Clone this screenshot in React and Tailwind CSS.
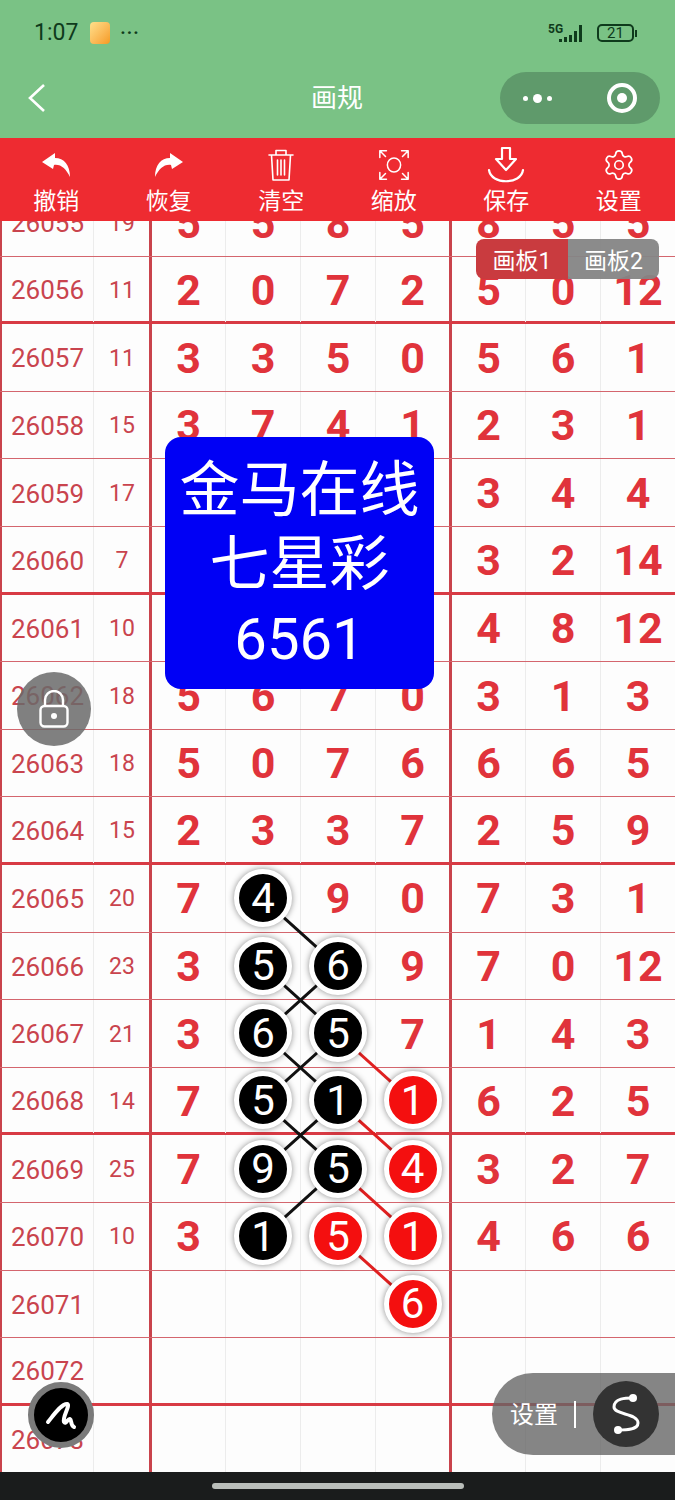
import React from 'react';
import { Settings } from 'lucide-react';

const ROW_H = 67.6;
const COL_X = [188, 263, 338, 413];

// b = black ball, r = red ball
const rows = [
  ['26055', '19', ['5', '5', '8', '5', '8', '5', '5']],
  ['26056', '11', ['2', '0', '7', '2', '5', '0', '12']],
  ['26057', '11', ['3', '3', '5', '0', '5', '6', '1']],
  ['26058', '15', ['3', '7', '4', '1', '2', '3', '1']],
  ['26059', '17', ['', '', '', '', '3', '4', '4']],
  ['26060', '7', ['', '', '', '', '3', '2', '14']],
  ['26061', '10', ['', '', '', '', '4', '8', '12']],
  ['26062', '18', ['5', '6', '7', '0', '3', '1', '3']],
  ['26063', '18', ['5', '0', '7', '6', '6', '6', '5']],
  ['26064', '15', ['2', '3', '3', '7', '2', '5', '9']],
  ['26065', '20', ['7', 'b4', '9', '0', '7', '3', '1']],
  ['26066', '23', ['3', 'b5', 'b6', '9', '7', '0', '12']],
  ['26067', '21', ['3', 'b6', 'b5', '7', '1', '4', '3']],
  ['26068', '14', ['7', 'b5', 'b1', 'r1', '6', '2', '5']],
  ['26069', '25', ['7', 'b9', 'b5', 'r4', '3', '2', '7']],
  ['26070', '10', ['3', 'b1', 'r5', 'r1', '4', '6', '6']],
  ['26071', '', ['', '', '', 'r6', '', '', '']],
  ['26072', '', ['', '', '', '', '', '', '']],
  ['26073', '', ['', '', '', '', '', '', '']],
];

// [col, row, col, row, color] between balls
const links = [
  [1, 10, 2, 11, '#111'],
  [1, 11, 2, 12, '#111'],
  [2, 11, 1, 12, '#111'],
  [1, 12, 2, 13, '#111'],
  [2, 12, 1, 13, '#111'],
  [2, 12, 3, 13, '#e02020'],
  [1, 13, 2, 14, '#111'],
  [2, 13, 1, 14, '#111'],
  [2, 13, 3, 14, '#e02020'],
  [2, 14, 1, 15, '#111'],
  [2, 14, 3, 15, '#e02020'],
  [2, 15, 3, 16, '#e02020'],
];

const tools = [
  ['撤销', 'undo'],
  ['恢复', 'redo'],
  ['清空', 'trash'],
  ['缩放', 'zoom'],
  ['保存', 'save'],
  ['设置', 'settings'],
];

const font = { fontFamily: 'Roboto, "Noto Sans CJK SC", sans-serif' };

function ToolIcon({ name }) {
  const p = { fill: 'none', stroke: '#fff', strokeWidth: 1.6, strokeLinecap: 'round', strokeLinejoin: 'round' };
  if (name === 'undo') {
    return (
      <svg width="32" height="32" viewBox="0 0 32 32">
        <path d="M15 4 L2 13 L13 20 L14 16 C21 15 26 20 30 28 C30 16 24 9 15 9 Z" fill="#fff" />
      </svg>
    );
  }
  if (name === 'redo') {
    return (
      <svg width="32" height="32" viewBox="0 0 32 32">
        <path d="M17 4 L30 13 L19 20 L18 16 C11 15 6 20 2 28 C2 16 8 9 17 9 Z" fill="#fff" />
      </svg>
    );
  }
  if (name === 'trash') {
    return (
      <svg width="36" height="36" viewBox="0 0 36 36" {...p}>
        <path d="M6 8 H30 M13 8 V3.5 H23 V8 M8.5 8 L10 33 H26 L27.5 8 M14.5 13 V28 M18 13 V28 M21.5 13 V28" />
      </svg>
    );
  }
  if (name === 'zoom') {
    return (
      <svg width="34" height="34" viewBox="0 0 36 36" {...p}>
        <ellipse cx="18" cy="18" rx="7" ry="7.5" />
        <path d="M3 10 V3 H10 M3 3 L9 9 M26 3 H33 V10 M33 3 L27 9 M3 26 V33 H10 M3 33 L9 27 M26 33 H33 V26 M33 33 L27 27" />
      </svg>
    );
  }
  if (name === 'save') {
    return (
      <svg width="38" height="38" viewBox="0 0 38 38" {...p} strokeWidth="2.2">
        <path d="M15 2 H23 V13 H29 L19 24 L9 13 H15 Z M2 24 C4 39 34 39 36 24" />
      </svg>
    );
  }
  return <Settings size={34} color="#fff" strokeWidth={1.2} />;
}

function Cell({ value, idx }) {
  const kind = value[0];
  const isBall = kind === 'b' || kind === 'r';
  const line = idx === 0 || idx === 4 ? 'border-l-[3px] border-l-[#c9434c]' : 'border-l border-l-[#ececec]';
  return (
    <div className={`flex items-center justify-center ${line}`}>
      {isBall ? (
        <div className={`relative z-10 flex h-[58px] w-[58px] items-center justify-center rounded-full border-[5px] border-white text-[42px] text-white shadow-[0_0_6px_rgba(0,0,0,0.45)] ${kind === 'b' ? 'bg-black' : 'bg-[#f40f0f]'}`}>
          {value.slice(1)}
        </div>
      ) : (
        <span className="pt-[1px] text-[43px] font-bold text-[#e0333b]">{value}</span>
      )}
    </div>
  );
}

export default function App() {
  return (
    <div className="flex h-[1500px] w-[675px] flex-col overflow-hidden bg-[#fdfdfd]" style={font}>
      {/* status + nav */}
      <div className="h-[138px] shrink-0 bg-[#7ac285]">
        <div className="flex h-[72px] items-center justify-between pb-[6px] pl-[34px] pr-[38px]">
          <div className="flex items-center text-[23px] text-[#0f3a1c]">
            <span>1:07</span>
            <span className="ml-3 h-[22px] w-[20px] rounded-[4px] bg-gradient-to-br from-[#ffe08a] to-[#f59a1b]" />
            <span className="ml-[10px] text-[18px] font-bold leading-none tracking-[1px]">···</span>
          </div>
          <div className="flex items-center text-[#0f3a1c]">
            <svg width="42" height="24" viewBox="0 0 42 24">
              <text x="1" y="12" fontSize="12" fontWeight="700" fill="#0f3a1c">5G</text>
              <path d="M12 18h3v3h-3zM17 16h3v5h-3zM22 14h3v7h-3zM27 10h3v11h-3zM32 4h3v17h-3z" fill="#0f3a1c" />
            </svg>
            <div className="ml-2 flex h-[18px] w-[37px] items-center justify-center rounded-[5px] border-2 border-[#0f3a1c] text-[15px] leading-none">21</div>
            <div className="ml-[1px] h-[7px] w-[2px] bg-[#0f3a1c]" />
          </div>
        </div>
        <div className="flex h-[52px] items-center pl-[27px] pr-[15px]">
          <svg width="20" height="30" viewBox="0 0 20 30" fill="none" stroke="#fff" strokeWidth="2.6">
            <path d="M17 2 L3 15 L17 28" />
          </svg>
          <div className="flex-1 pl-[127px] text-center text-[26px] text-white">画规</div>
          <div className="flex h-[52px] w-[160px] items-center justify-between rounded-full bg-[#5f9a6b] px-[23px]">
            <div className="flex items-center gap-[5px]">
              <span className="h-[5px] w-[5px] rounded-full bg-white" />
              <span className="h-[9px] w-[9px] rounded-full bg-white" />
              <span className="h-[5px] w-[5px] rounded-full bg-white" />
            </div>
            <div className="flex h-[30px] w-[30px] items-center justify-center rounded-full border-[4px] border-white">
              <span className="h-[10px] w-[10px] rounded-full bg-white" />
            </div>
          </div>
        </div>
      </div>

      {/* toolbar */}
      <div className="z-20 grid h-[83px] shrink-0 grid-cols-6 bg-[#ee2b31] pt-[8px] text-white">
        {tools.map(([label, icon]) => (
          <div key={label} className="flex flex-col items-center">
            <div className="flex h-[38px] items-center justify-center"><ToolIcon name={icon} /></div>
            <div className="mt-[1px] text-[23px] leading-[34px]">{label}</div>
          </div>
        ))}
      </div>

      {/* table */}
      <div className="relative flex-1 overflow-hidden">
        <div className="relative mt-[-32px]">
          {rows.map(([period, sum, cells], i) => (
            <div
              key={period}
              className={`grid h-[67.6px] grid-cols-[93px_56px_76px_75px_75px_74px_76px_75px_75px] ${(i - 1) % 4 === 0 ? 'border-b-[3px] border-[#d83a44]' : 'border-b border-[#d4666e]'}`}
            >
              <div className="flex items-center justify-center border-l-[2px] border-[#c9434c] pt-[3px] text-[26px] text-[#c9444e]">{period}</div>
              <div className="flex items-center justify-center border-l border-[#ececec] pl-[1px] pt-[3px] text-[23px] text-[#c9444e]">{sum}</div>
              {cells.map((c, j) => <Cell key={j} value={c} idx={j} />)}
            </div>
          ))}
          <svg className="absolute left-0 top-0 z-[5]" width="675" height="1290">
            {links.map(([c1, r1, c2, r2, color], i) => (
              <line
                key={i}
                x1={COL_X[c1]}
                y1={r1 * ROW_H + 33.8}
                x2={COL_X[c2]}
                y2={r2 * ROW_H + 33.8}
                stroke={color}
                strokeWidth="3"
              />
            ))}
          </svg>
        </div>

        {/* board tabs */}
        <div className="absolute left-[476px] top-[18px] z-10 flex h-[40px] text-[23px] text-white">
          <div className="flex w-[92px] items-center justify-center rounded-l-[8px] bg-[#c93b3f] pt-[6px]">画板1</div>
          <div className="flex w-[91px] items-center justify-center rounded-r-[8px] bg-[#858585]/95 pt-[6px]">画板2</div>
        </div>

        {/* blue notice */}
        <div className="absolute left-[165px] top-[216px] z-10 flex h-[252px] w-[269px] flex-col items-center justify-center rounded-[16px] bg-[#0000f5] pt-[3px] text-[60px] leading-[74px] text-white">
          <div>金马在线</div>
          <div>七星彩</div>
          <div className="text-[58px]">6561</div>
        </div>

        {/* lock */}
        <div className="absolute left-[17px] top-[451px] z-10 flex h-[74px] w-[74px] items-center justify-center rounded-full bg-[#6a6a6a]/85">
          <svg width="30" height="38" viewBox="0 0 30 38" fill="none" stroke="#fff" strokeWidth="2.4">
            <rect x="1.5" y="16" width="27" height="20.5" rx="4" />
            <path d="M6 16 V10 A9 9 0 0 1 24 10 V16" />
            <circle cx="15" cy="26" r="3" fill="#fff" stroke="none" />
          </svg>
        </div>

        {/* pen */}
        <div className="absolute left-[28px] top-[1161px] z-10 flex h-[66px] w-[66px] items-center justify-center rounded-full border-[6px] border-[#7a7a7a] bg-black">
          <svg width="36" height="36" viewBox="0 0 36 36" fill="none" stroke="#fff" strokeWidth="4" strokeLinecap="round" strokeLinejoin="round">
            <path d="M5 25 C10 19 18 7 24 7 C28 8 19 20 21 25 C23 28 25 21 27 22 C29 23 27 28 31 30" />
          </svg>
        </div>

        {/* settings pill */}
        <div className="absolute left-[492px] top-[1152px] z-10 flex h-[82px] w-[183px] items-center rounded-l-[41px] bg-[#666]/80 pl-[18px] text-[24px] text-white">
          <span className="pt-[2px]">设置</span>
          <span className="ml-[16px] h-[27px] w-[2px] bg-white" />
          <div className="ml-[17px] flex h-[66px] w-[66px] items-center justify-center rounded-full bg-[#333]">
            <svg width="40" height="44" viewBox="0 0 40 44" fill="none" stroke="#fff" strokeWidth="3">
              <path d="M27 6 C20 6 8 6 8 15 C8 23 32 21 32 31 C32 38 20 38 12 38" />
              <circle cx="27" cy="6" r="4" fill="#fff" stroke="none" />
              <circle cx="12" cy="38" r="4" fill="#fff" stroke="none" />
            </svg>
          </div>
        </div>
      </div>

      {/* system bar */}
      <div className="flex h-[28px] shrink-0 items-center justify-center bg-[#1a1c1c]">
        <div className="h-[6px] w-[252px] rounded-full bg-[#b9bdb9]" />
      </div>
    </div>
  );
}
